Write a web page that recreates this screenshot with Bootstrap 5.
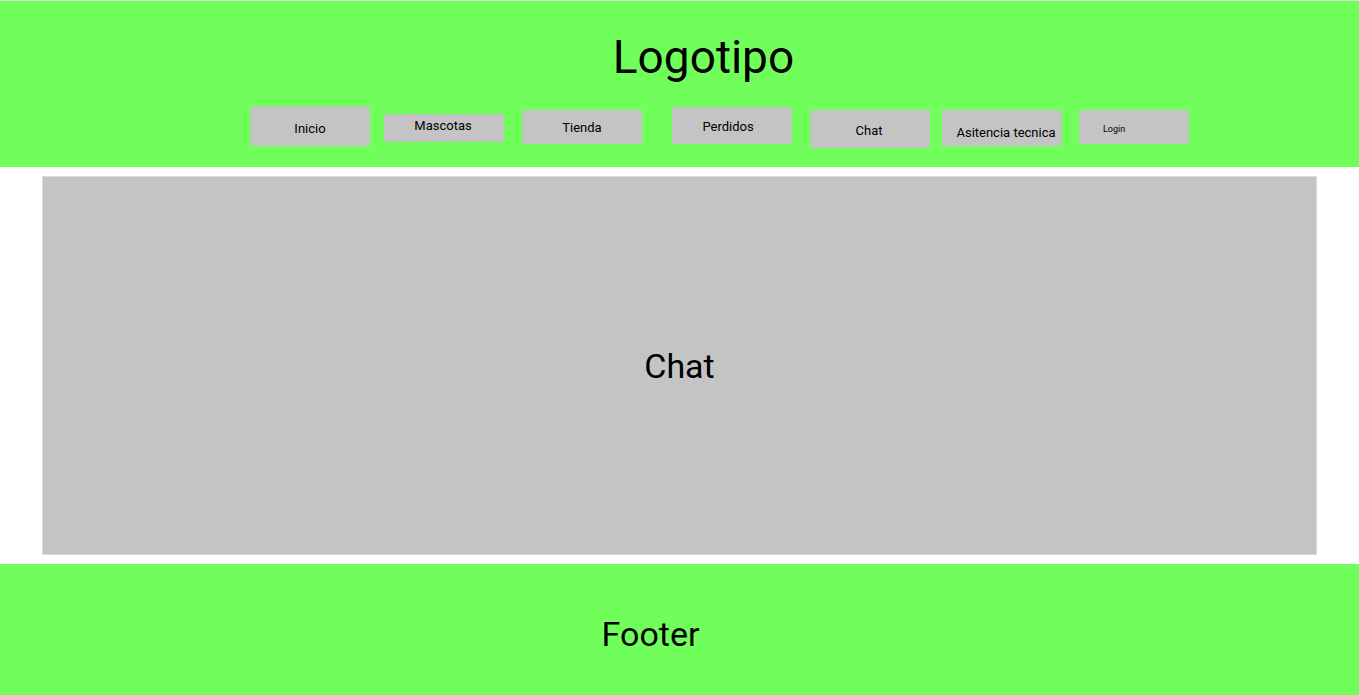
<!DOCTYPE html>
<html lang="es">
<head>
<meta charset="utf-8">
<meta name="viewport" content="width=device-width, initial-scale=1">
<title>Chat</title>
<link href="https://cdn.jsdelivr.net/npm/bootstrap@5.3.0/dist/css/bootstrap.min.css" rel="stylesheet">
<style>
  body { font-family: Roboto, "Liberation Sans", sans-serif; color: #000; }
  .site-bar { background: #70ff5a; }
  .site-header { border-top: 1px solid #d3e0d0; padding: 29px 0 19px; }
  .brand-title { font-size: 46px; line-height: 54px; margin-bottom: 22px; padding-left: 48px; font-weight: 400; }
  .menu { padding-left: 80px; }
  .menu-link {
    width: 120px; height: 34px; margin-top: 4px;
    background: #c4c4c4; color: #000;
    font-size: 13px; line-height: 16px; text-decoration: none; white-space: nowrap;
  }
  .menu-link:hover { background: #b4b4b4; }
  .link-inicio { height: 40px; margin-top: 0; padding-top: 6px; }
  .link-mascotas { height: 28px; margin-top: 8px; margin-left: 14px; padding: 0 2px 4px 0; }
  .link-tienda { margin-left: 18px; padding-top: 2px; }
  .link-perdidos { height: 37px; margin: 1px 18px 0 30px; padding: 2px 8px 0 0; }
  .link-chat { height: 38px; margin-right: 12px; padding: 4px 2px 0 0; }
  .link-asistencia { height: 36px; margin-right: 17px; padding: 10px 0 0 8px; }
  .link-login { width: 110px; padding: 4px 0 0 24px; font-size: 9px; }
  .chat-panel { background: #c4c4c4; border: 1px solid #dadada; margin: 9px 42px; }
  .section-title { font-size: 34px; line-height: 42px; font-weight: 400; }
  .site-footer { padding: 49px 58px 40px 0; }
</style>
</head>
<body class="d-flex flex-column min-vh-100">
  <header class="site-bar site-header">
    <h1 class="brand-title text-center">Logotipo</h1>
    <nav class="menu d-flex flex-wrap justify-content-center align-items-start" aria-label="Principal">
      <a href="#inicio" class="menu-link link-inicio d-flex align-items-center justify-content-center">Inicio</a>
      <a href="#mascotas" class="menu-link link-mascotas d-flex align-items-center justify-content-center">Mascotas</a>
      <a href="#tienda" class="menu-link link-tienda d-flex align-items-center justify-content-center">Tienda</a>
      <a href="#perdidos" class="menu-link link-perdidos d-flex align-items-center justify-content-center">Perdidos</a>
      <a href="#chat" class="menu-link link-chat d-flex align-items-center justify-content-center">Chat</a>
      <a href="#asistencia" class="menu-link link-asistencia d-flex align-items-center justify-content-center">Asitencia tecnica</a>
      <a href="#login" class="menu-link link-login d-flex align-items-center">Login</a>
    </nav>
  </header>
  <main id="chat" class="chat-panel flex-grow-1 d-flex align-items-center justify-content-center">
    <h2 class="section-title mb-0">Chat</h2>
  </main>
  <footer class="site-bar site-footer text-center">
    <p class="section-title mb-0">Footer</p>
  </footer>
<script src="https://cdn.jsdelivr.net/npm/bootstrap@5.3.0/dist/js/bootstrap.bundle.min.js"></script>
</body>
</html>
